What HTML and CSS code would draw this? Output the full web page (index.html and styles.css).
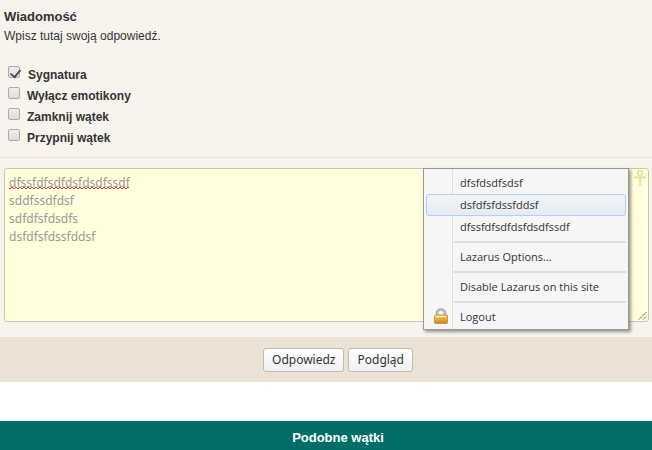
FILE: index.html
```html
<!DOCTYPE html>
<html lang="pl">
<head>
    <meta charset="UTF-8">
    <meta name="viewport" content="width=device-width, initial-scale=1.0">
    <title>Odpowiedz</title>
    <link rel="stylesheet" href="styles.css">
</head>
<body>
    <form class="reply-form">
        <!-- Post options -->
        <div class="reply-options">
            <label class="reply-title" for="message">Wiadomość</label>
            <p class="reply-hint">Wpisz tutaj swoją odpowiedź.</p>
            <div class="option-list">
                <label class="option option-first"><input type="checkbox" checked> Sygnatura</label>
                <label class="option"><input type="checkbox"> Wyłącz emotikony</label>
                <label class="option"><input type="checkbox"> Zamknij wątek</label>
                <label class="option"><input type="checkbox"> Przypnij wątek</label>
            </div>
        </div>

        <!-- Message editor -->
        <div class="editor">
            <div class="editor-box">
                <textarea id="message" class="editor-text" spellcheck="false">dfssfdfsdfdsfdsdfssdf
sddfssdfdsf
sdfdfsfdsdfs
dsfdfsfdssfddsf</textarea>
                <svg class="ankh" width="12" height="17" viewBox="0 0 12 17">
                    <path d="M6 8C3.500 5.500 2.800 1.500 6 1.500S8.500 5.500 6 8ZM6 8V16M1 8.500H11" fill="none" stroke="#e6e4a0" stroke-width="2"/>
                    <path d="M0.700 7.200V9.800M11.300 7.200V9.800M4.500 16H7.500" stroke="#e6e4a0" stroke-width="1.200"/>
                </svg>
                <svg class="grip" width="9" height="9" viewBox="0 0 9 9">
                    <path d="M1 8.500L8.500 1M5 8.500L8.500 5" stroke="#44443c" stroke-dasharray="1.600 0.600"/>
                </svg>

                <!-- Recovery menu -->
                <div class="menu">
                    <button type="button" class="menu-item">dfsfdsdfsdsf</button>
                    <button type="button" class="menu-item active">dsfdfsfdssfddsf</button>
                    <button type="button" class="menu-item">dfssfdfsdfdsfdsdfssdf</button>
                    <div class="menu-line"></div>
                    <button type="button" class="menu-item">Lazarus Options...</button>
                    <div class="menu-line"></div>
                    <button type="button" class="menu-item">Disable Lazarus on this site</button>
                    <div class="menu-line"></div>
                    <button type="button" class="menu-item">
                        <svg class="lock" width="16" height="16" viewBox="0 0 16 16">
                            <defs>
                                <linearGradient id="gold" x1="0" y1="0" x2="0" y2="1">
                                    <stop offset="0" stop-color="#fbd98a"/>
                                    <stop offset="0.450" stop-color="#f3b447"/>
                                    <stop offset="1" stop-color="#c77d12"/>
                                </linearGradient>
                            </defs>
                            <path d="M4 8V5.500a4 4 0 0 1 8 0V8" fill="none" stroke="#8f8f8f" stroke-width="2.600"/>
                            <path d="M4 8V5.500a4 4 0 0 1 8 0V8" fill="none" stroke="#dcdcdc" stroke-width="1"/>
                            <rect x="1.500" y="7" width="13" height="8.500" rx="1" fill="url(#gold)" stroke="#d0983c"/>
                            <path d="M3 8.500H13" stroke="#fff0c0"/>
                            <path d="M3 11H13M3 13H13" stroke="#e09c2c"/>
                        </svg>
                        Logout
                    </button>
                </div>
            </div>
        </div>

        <div class="reply-buttons">
            <button type="submit" class="btn">Odpowiedz</button>
            <button type="button" class="btn">Podgląd</button>
        </div>
    </form>

    <h2 class="similar-title">Podobne wątki</h2>
</body>
</html>
```

FILE: styles.css
```css
* {
    box-sizing: border-box;
}

body {
    margin: 0;
    background: #fff;
    color: #333;
    font-family: "Liberation Sans", Arial, sans-serif;
    font-size: 12px;
}

.reply-form {
    background: #f8f3ed;
}

/* Post options */
.reply-options {
    padding: 8px 4px 11px;
    border-bottom: 1px solid #e9e0d6;
}

.reply-title {
    display: block;
    font-size: 13px;
    font-weight: bold;
    line-height: 18px;
}

.reply-hint {
    margin: 0;
    line-height: 20px;
}

.option-list {
    display: flex;
    flex-direction: column;
    align-items: flex-start;
    padding-top: 16px;
}

.option {
    display: flex;
    align-items: flex-end;
    gap: 7px;
    height: 21px;
    padding-left: 4px;
    font-weight: bold;
    line-height: 16px;
}

.option-first {
    gap: 8px;
}

.option input {
    appearance: none;
    width: 12px;
    height: 12px;
    margin: 0 0 5px;
    border: 1px solid #aaa;
    border-radius: 2px;
    background: linear-gradient(#eee, #dcdcdc);
}

.option input:checked::after {
    content: "";
    display: block;
    width: 5px;
    height: 9px;
    margin: 0 0 0 3px;
    border: solid #444;
    border-width: 0 2px 2px 0;
    transform: rotate(40deg) scale(0.9);
}

/* Editor */
.editor {
    padding: 10px 3px 15px 4px;
}

.editor-box {
    position: relative;
}

/* Spelling underline of the first word */
.editor-box::after {
    content: "";
    position: absolute;
    top: 19px;
    left: 5px;
    width: 120px;
    height: 2px;
    background: conic-gradient(#e33 25%, transparent 0 50%, #e33 0 75%, transparent 0) 0 0 / 4px 2px;
}

.editor-text {
    display: block;
    width: 100%;
    height: 154px;
    padding: 5px 4px;
    border: 1px solid #c6c6b8;
    border-radius: 3px;
    background: #ffffdb;
    color: #999;
    font-family: "Noto Sans", sans-serif;
    font-size: 12px;
    line-height: 18px;
    resize: none;
}

.ankh {
    position: absolute;
    top: 1px;
    right: 3px;
}

.grip {
    position: absolute;
    right: 2px;
    bottom: 2px;
}

/* Recovery menu */
.menu {
    position: absolute;
    z-index: 1;
    top: 0;
    right: 20px;
    width: 206px;
    padding: 3px 2px 1px;
    border: 1px solid #979797;
    background: linear-gradient(90deg, #f6f6f6 28px, #e0e0e0 28px, #e0e0e0 29px, #f6f6f6 29px);
    box-shadow: 2px 2px 3px rgba(0, 0, 0, 0.4);
}

.menu-item {
    display: block;
    position: relative;
    width: 100%;
    height: 22px;
    padding: 0 0 0 33px;
    border: 1px solid transparent;
    border-radius: 3px;
    background: none;
    color: #333;
    font-family: "Open Sans", sans-serif;
    font-size: 11px;
    line-height: 20px;
    text-align: left;
}

.menu-item.active {
    border-color: #aecff7;
    background: linear-gradient(#f2f4f8, #e5ebf3);
}

.menu-line {
    height: 2px;
    margin: 3px 0 3px 28px;
    background: #dcdcdc;
}

.lock {
    position: absolute;
    top: 1px;
    left: 6px;
}

/* Form buttons */
.reply-buttons {
    display: flex;
    justify-content: center;
    gap: 4px;
    padding: 11px 0 10px 24px;
    background: #ebe2d4;
}

.btn {
    height: 24px;
    padding: 0 8px;
    border: 1px solid #bbb;
    border-radius: 3px;
    background: linear-gradient(#fff, #f0f0f0);
    color: #333;
    font-family: "Noto Sans", sans-serif;
    font-size: 12px;
    line-height: 22px;
}

/* Similar threads */
.similar-title {
    margin: 39px 0 0;
    padding: 8px 0 4px 24px;
    background: #006e66;
    color: #fff;
    font-size: 13px;
    line-height: 17px;
    text-align: center;
}
```
